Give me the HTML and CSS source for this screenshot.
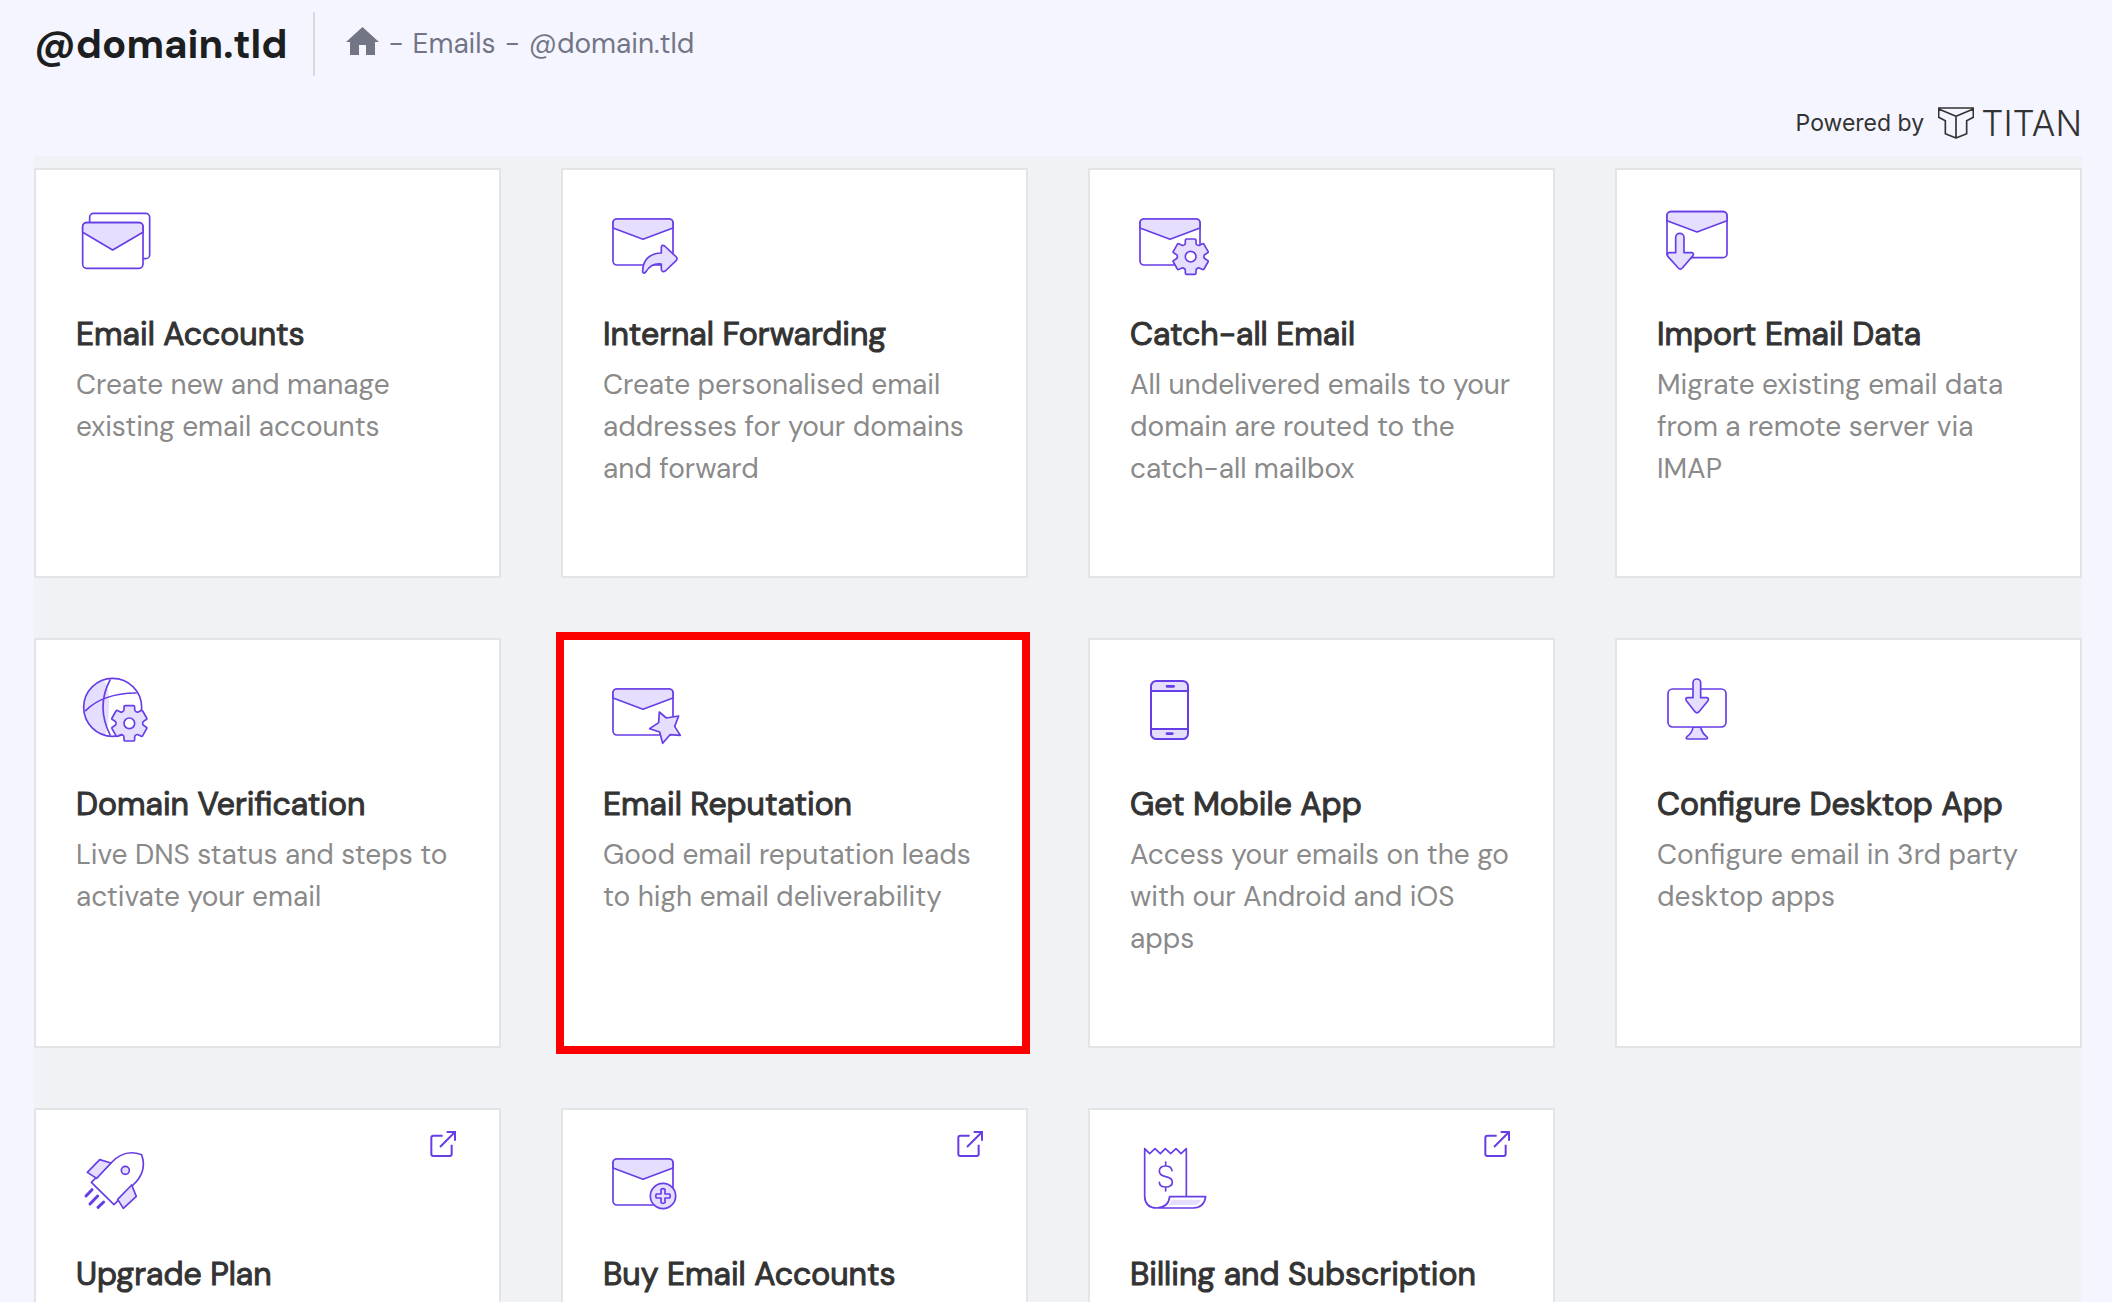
FILE: index.html
```html
<!DOCTYPE html>
<html lang="en">
<head>
<meta charset="utf-8">
<meta name="viewport" content="width=device-width, initial-scale=1">
<title>@domain.tld</title>
<link rel="stylesheet" href="styles.css">
</head>
<body>
<svg class="sprite" aria-hidden="true">
  <symbol id="envelope" viewBox="0 0 240 240">
    <rect class="paper" x="30" y="57" width="180" height="138" rx="12"/>
    <path class="tint" d="M30 84V69a12 12 0 0 1 12-12H198a12 12 0 0 1 12 12V84L120 118Z"/>
  </symbol>
  <symbol id="gear" viewBox="-60 -60 120 120">
    <path class="tint" d="M-20-35Q-16-36-16-42V-49Q-16-53-12-53H12Q16-53 16-49V-42Q16-36 20-35Q23-32 28-35L34-38Q38-40 40-37L52-16Q54-13 50-11L44-7Q39-4 40 0Q39 4 44 7L50 11Q54 13 52 16L40 37Q38 40 34 38L28 35Q23 32 20 35Q16 36 16 42V49Q16 53 12 53H-12Q-16 53-16 49V42Q-16 36-20 35Q-23 32-28 35L-34 38Q-38 40-40 37L-52 16Q-54 13-50 11L-44 7Q-39 4-40 0Q-39-4-44-7L-50-11Q-54-13-52-16L-40-37Q-38-40-34-38L-28-35Q-23-32-20-35Z"/>
    <circle class="paper" r="16"/>
  </symbol>
  <symbol id="external" viewBox="0 0 78 78">
    <path d="M38 14H10Q4 14 4 20V69Q4 75 10 75H59Q65 75 65 69V41"/>
    <path d="M50 3H75V29M75 3L30 48"/>
  </symbol>
</svg>
<div class="page">
  <header class="topbar">
    <h1 class="topbar-title">@domain.tld</h1>
    <nav class="breadcrumb" aria-label="Breadcrumb">
      <a class="home" href="#" aria-label="Home"><svg viewBox="0 0 33 28" aria-hidden="true"><path d="M16.500 0 33 15H29V28H20V18H13V28H4V15H0Z"/></svg></a>
      <span>-</span>
      <a href="#">Emails</a>
      <span>-</span>
      <a href="#">@domain.tld</a>
    </nav>
  </header>
  <div class="powered">
    <span>Powered by</span>
    <span class="titan">
      <svg viewBox="0 0 108 96" aria-hidden="true"><path d="M2 3H106V31L86 41V80L54 93L22 80V41L2 31ZM2 6L54 28L106 6M54 28V93"/></svg>
      <span>TITAN</span>
    </span>
  </div>
  <main class="panel">
    <a class="card" href="#">
      <svg class="icon" viewBox="0 0 240 240" aria-hidden="true">
        <rect class="paper" x="41" y="40" width="180" height="136" rx="12"/>
        <rect class="paper" x="20" y="68" width="181" height="137" rx="12"/>
        <path class="tint" d="M20 97V80a12 12 0 0 1 12-12H189a12 12 0 0 1 12 12V97L110 150Z"/>
      </svg>
      <h2>Email Accounts</h2>
      <p>Create new and manage existing email accounts</p>
    </a>
    <a class="card" href="#">
      <svg class="icon" viewBox="0 0 240 240" aria-hidden="true">
        <use href="#envelope" width="240" height="240"/>
        <path class="tint" d="M119 216C118 180 140 160 175 159V141Q177 133 185 138L220 171Q224 176 220 181L187 213Q177 218 175 208V192C150 190 140 198 129 215Q122 223 119 216Z"/>
      </svg>
      <h2>Internal Forwarding</h2>
      <p>Create personalised email addresses for your domains and forward</p>
    </a>
    <a class="card" href="#">
      <svg class="icon" viewBox="0 0 240 240" aria-hidden="true">
        <use href="#envelope" width="240" height="240"/>
        <use href="#gear" x="122" y="110" width="120" height="120"/>
      </svg>
      <h2>Catch-all Email</h2>
      <p>All undelivered emails to your domain are routed to the catch-all mailbox</p>
    </a>
    <a class="card" href="#">
      <svg class="icon" viewBox="0 0 240 240" aria-hidden="true">
        <use href="#envelope" y="-22" width="240" height="240"/>
        <path class="tint" d="M56 158V112a12.500 12 0 0 1 25 0V158H104Q112 160 108 167L76 204Q70 210 64 204L33 170Q28 160 36 158Z"/>
      </svg>
      <h2>Import Email Data</h2>
      <p>Migrate existing email data from a remote server via IMAP</p>
    </a>
    <a class="card" href="#">
      <svg class="icon" viewBox="0 0 240 240" aria-hidden="true">
        <path class="shade" d="M80 31Q100 45 99 110Q98 175 86 196A87 87 0 0 1 80 31Z"/>
        <circle cx="110" cy="112" r="87"/>
        <path d="M102 30Q60 110 102 194M29 122Q80 70 180 69"/>
        <use href="#gear" x="100" y="100" width="120" height="120"/>
      </svg>
      <h2>Domain Verification</h2>
      <p>Live DNS status and steps to activate your email</p>
    </a>
    <a class="card card-marked" href="#">
      <svg class="icon" viewBox="0 0 240 240" aria-hidden="true">
        <use href="#envelope" width="240" height="240"/>
        <path class="tint" d="M169 126L190 144L227 138L215 169L232 196L201 194L179 220L170 186L140 176L167 158Z"/>
      </svg>
      <h2>Email Reputation</h2>
      <p>Good email reputation leads to high email deliverability</p>
    </a>
    <a class="card" href="#">
      <svg class="icon icon-bold" viewBox="0 0 240 240" aria-hidden="true">
        <rect class="tint" x="63" y="33" width="111" height="174" rx="16"/>
        <path class="paper" d="M63 63H174V177H63Z"/>
        <path d="M111 49H131M111 191H127" stroke-width="8"/>
      </svg>
      <h2>Get Mobile App</h2>
      <p>Access your emails on the go with our Android and iOS apps</p>
    </a>
    <a class="card" href="#">
      <svg class="icon" viewBox="0 0 240 240" aria-hidden="true">
        <path class="tint" d="M108 171Q106 188 90 200Q84 207 93 207H146Q155 207 149 200Q134 188 131 171Z"/>
        <rect class="paper" x="33" y="57" width="174" height="114" rx="14"/>
        <path class="tint" d="M108 83V38a11.500 11 0 0 1 23 0V83H149Q157 84 153 92L126 125Q120 132 114 125L88 92Q84 84 91 83Z"/>
      </svg>
      <h2>Configure Desktop App</h2>
      <p>Configure email in 3rd party desktop apps</p>
    </a>
    <a class="card" href="#">
      <svg class="external" aria-hidden="true"><use href="#external"/></svg>
      <svg class="icon" viewBox="0 0 240 240" aria-hidden="true">
        <path d="M46 127L105 69Q145 25 197 44Q215 95 170 136L114 194Z"/>
        <path class="tint" d="M71 59L105 69L62 115L34 97ZM167 135L181 169L142 205L125 178Z"/>
        <circle class="tint" cx="148" cy="91" r="12"/>
        <path d="M48 149L30 168M65 168L42 192M83 186L66 202" stroke-width="9"/>
      </svg>
      <h2>Upgrade Plan</h2>
    </a>
    <a class="card" href="#">
      <svg class="external" aria-hidden="true"><use href="#external"/></svg>
      <svg class="icon" viewBox="0 0 240 240" aria-hidden="true">
        <use href="#envelope" width="240" height="240"/>
        <circle class="tint" cx="180" cy="168" r="38"/>
        <path d="M174 148Q180 144 186 148V162H200Q204 168 200 174H186V188Q180 192 174 188V174H160Q156 168 160 162H174Z"/>
      </svg>
      <h2>Buy Email Accounts</h2>
    </a>
    <a class="card" href="#">
      <svg class="external" aria-hidden="true"><use href="#external"/></svg>
      <svg class="icon" viewBox="0 0 240 240" aria-hidden="true">
        <path d="M169 170V26L153 41L138 26L122 41L106 26L91 41L75 26L59 41L44 26V170Q46 204 80 204Q116 202 119 170H227Q222 204 190 204H80"/>
        <path class="shade" d="M126 179H213Q208 194 190 195H116Z"/>
        <path d="M126 92Q124 78 107 78Q88 78 88 94Q88 106 107 110Q127 114 127 126Q127 141 107 141Q89 141 88 127M107 66V78M107 141V153"/>
      </svg>
      <h2>Billing and Subscription</h2>
    </a>
  </main>
</div>
</body>
</html>
```
FILE: styles.css
```css
:root {
  --accent: #673de6;
  --accent-soft: #e6deff;
  --text: #333333;
  --muted: #8a8a8a;
  --crumb: #727586;
}

* {
  box-sizing: border-box;
}

body {
  margin: 0;
  background: #f5f5ff;
  color: var(--text);
  font-family: "DM Sans", Inter, sans-serif;
}

a {
  color: inherit;
  text-decoration: none;
}

.sprite {
  display: none;
}

.page {
  height: 100vh;
  overflow: hidden;
  padding: 0 30px 0 34px;
}

.topbar {
  display: flex;
  align-items: center;
  height: 88px;
}

.topbar-title {
  margin: 0;
  padding-right: 26px;
  color: #1d1e20;
  font-size: 40px;
  font-weight: 700;
  line-height: 64px;
  border-right: 2px solid #d8dae0;
}

.breadcrumb {
  display: flex;
  align-items: center;
  gap: 9px;
  padding: 0 0 2px 31px;
  color: var(--crumb);
  font-size: 28px;
}

.home svg {
  display: block;
  width: 33px;
  height: 28px;
  margin-bottom: 4px;
  fill: var(--crumb);
}

.powered {
  display: flex;
  align-items: center;
  justify-content: flex-end;
  gap: 14px;
  height: 68px;
  padding-top: 2px;
  font-family: Inter, sans-serif;
  font-size: 23px;
}

.titan {
  display: flex;
  align-items: center;
  gap: 7px;
  font-size: 35px;
  font-weight: 300;
  line-height: 32px;
}

.titan svg {
  width: 36px;
  height: 32px;
  fill: none;
  stroke: var(--text);
  stroke-width: 5;
  stroke-linejoin: round;
}

.panel {
  display: grid;
  grid-template-columns: repeat(4, 1fr);
  gap: 60px;
  padding-top: 12px;
  background: #f1f2f6;
}

.card {
  position: relative;
  min-height: 410px;
  padding: 30px 40px;
  background: #ffffff;
  border: 2px solid #e3e4e6;
}

.card-marked::after {
  content: "";
  position: absolute;
  inset: -8px -4px -8px -7px;
  border: 8px solid #fa0000;
}

.card h2 {
  margin: 34px 0 10px;
  font-size: 32px;
  font-weight: 400;
  line-height: 40px;
  -webkit-text-stroke: 1px currentColor;
}

.card p {
  margin: 0;
  color: var(--muted);
  font-size: 28px;
  line-height: 42px;
}

.icon {
  display: block;
  width: 80px;
  height: 80px;
  overflow: visible;
  fill: none;
  stroke: var(--accent);
  stroke-width: 5;
  stroke-linecap: round;
  stroke-linejoin: round;
}

.icon-bold {
  stroke-width: 6;
}

.tint {
  fill: var(--accent-soft);
}

.paper {
  fill: #ffffff;
}

.shade {
  fill: var(--accent-soft);
  stroke: none;
}

.external {
  position: absolute;
  top: 21px;
  right: 43px;
  width: 26px;
  height: 26px;
  fill: none;
  stroke: var(--accent);
  stroke-width: 6;
}
```
